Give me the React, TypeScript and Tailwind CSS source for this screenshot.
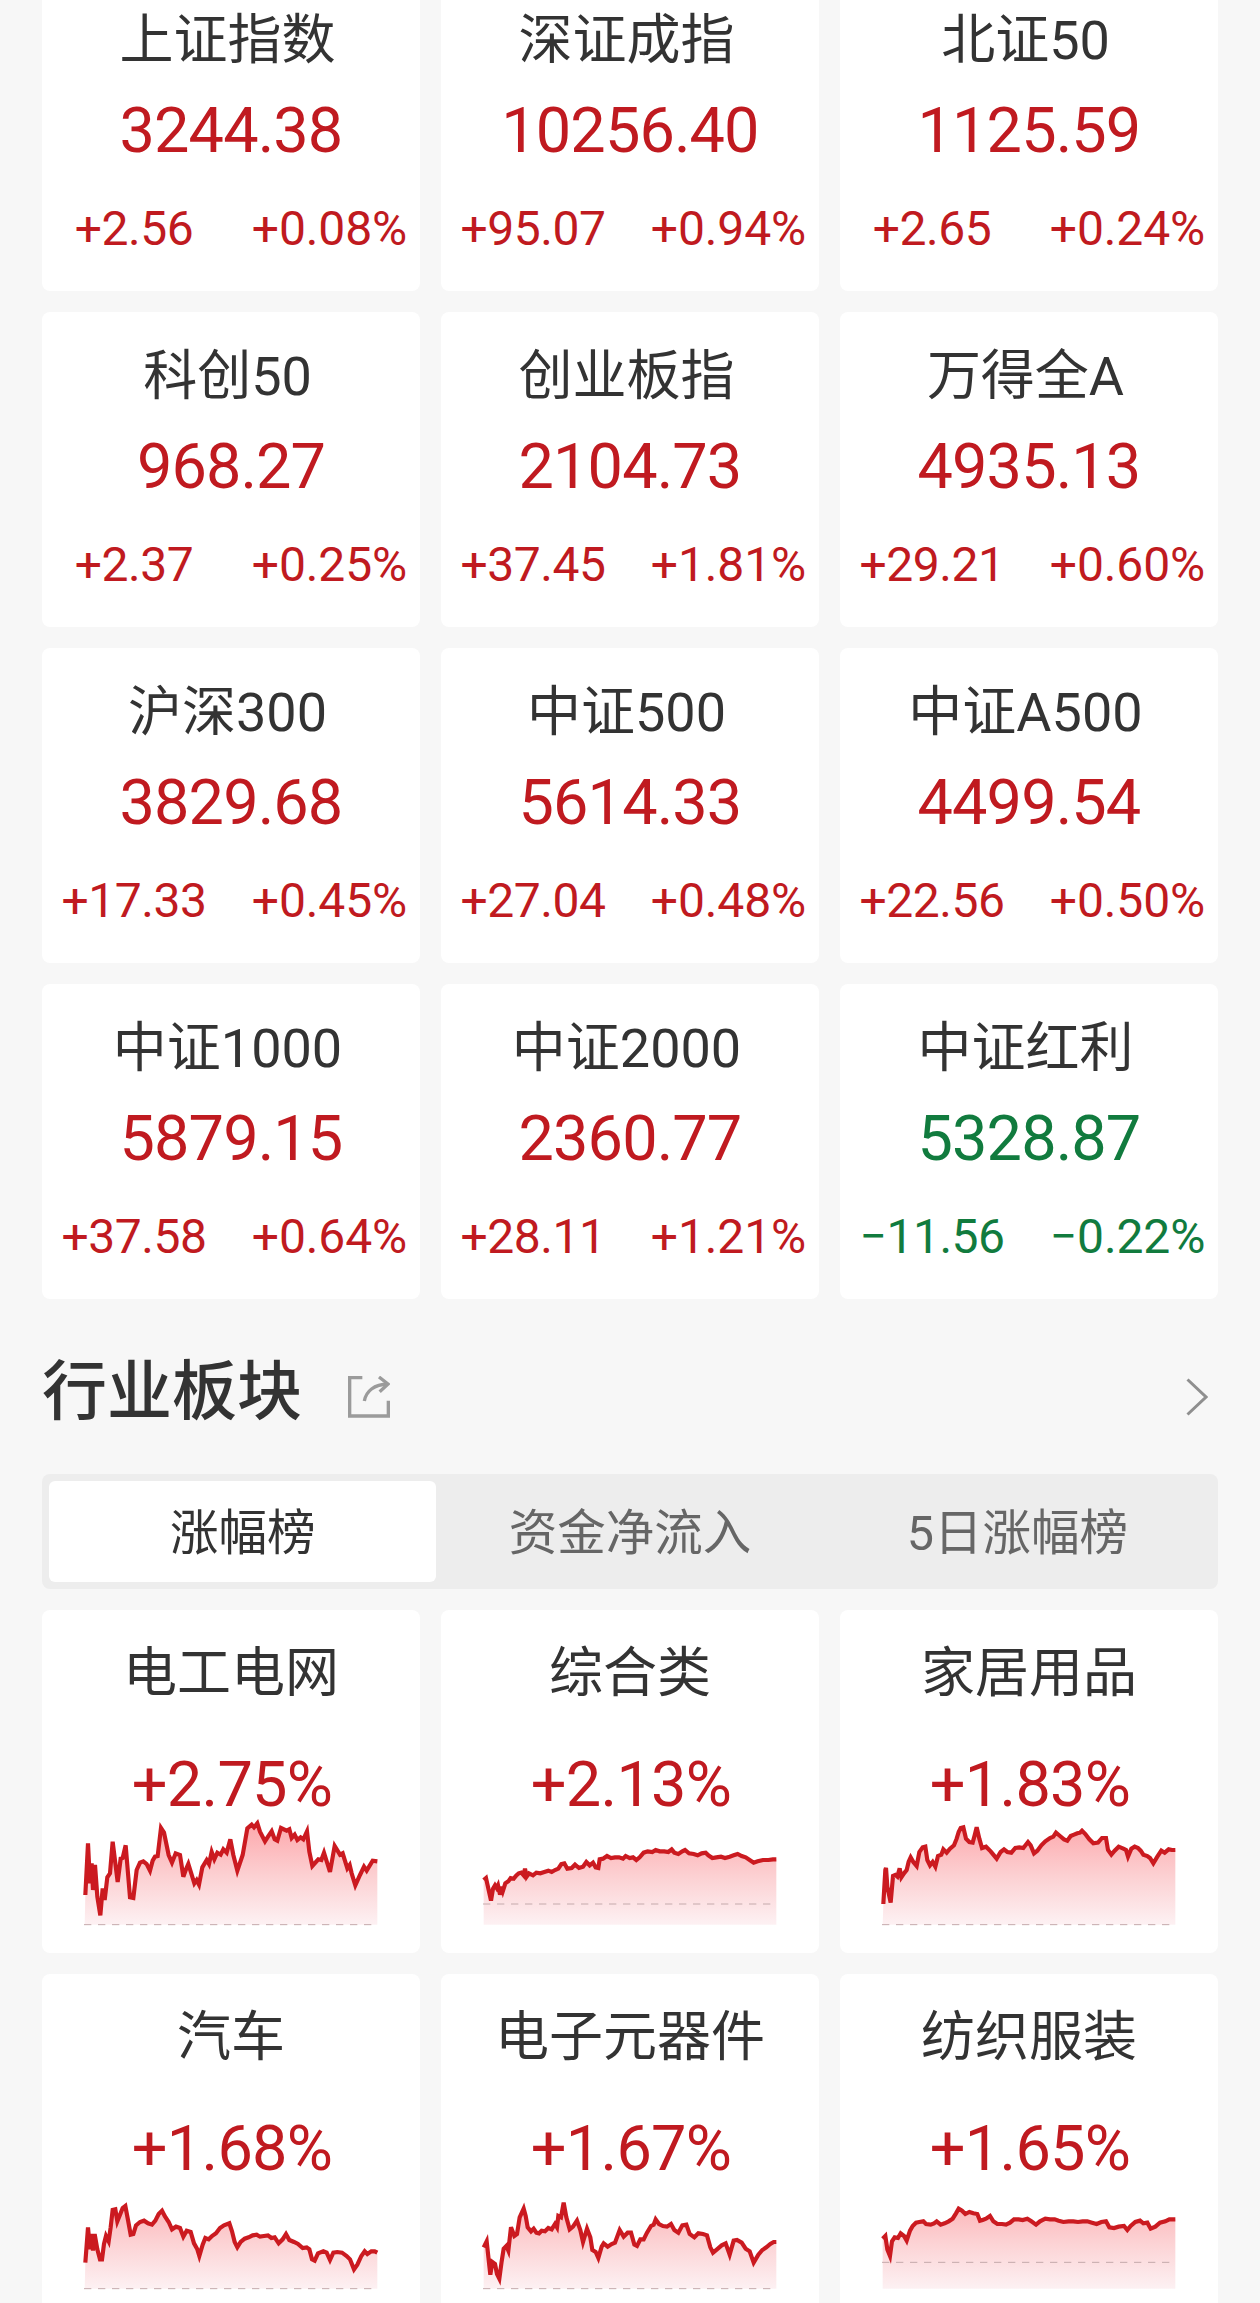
import { useId } from 'react';
import clsx from 'clsx';

interface IndexQuote {
  name: string;
  price: string;
  change: string;
  percent: string;
}

interface Sector {
  name: string;
  percent: string;
  // y of the previous-close line
  base: number;
  points: string;
}

const indices: IndexQuote[] = [
  { name: '上证指数', price: '3244.38', change: '+2.56', percent: '+0.08%' },
  { name: '深证成指', price: '10256.40', change: '+95.07', percent: '+0.94%' },
  { name: '北证50', price: '1125.59', change: '+2.65', percent: '+0.24%' },
  { name: '科创50', price: '968.27', change: '+2.37', percent: '+0.25%' },
  { name: '创业板指', price: '2104.73', change: '+37.45', percent: '+1.81%' },
  { name: '万得全A', price: '4935.13', change: '+29.21', percent: '+0.60%' },
  { name: '沪深300', price: '3829.68', change: '+17.33', percent: '+0.45%' },
  { name: '中证500', price: '5614.33', change: '+27.04', percent: '+0.48%' },
  { name: '中证A500', price: '4499.54', change: '+22.56', percent: '+0.50%' },
  { name: '中证1000', price: '5879.15', change: '+37.58', percent: '+0.64%' },
  { name: '中证2000', price: '2360.77', change: '+28.11', percent: '+1.21%' },
  { name: '中证红利', price: '5328.87', change: '−11.56', percent: '−0.22%' },
];

const tabs = ['涨幅榜', '资金净流入', '5日涨幅榜'];

const sectors: Sector[] = [
  {
    name: '电工电网',
    percent: '+2.75%',
    base: 314,
    points:
      '4,225 12,70 18,190 23,130 27,210 33,135 40,230 49,286 56,205 62,240 70,172 78,160 86,65 101,186 110,116 116,114 125,76 138,232 148,234 158,150 168,128 178,124 188,132 198,152 206,122 213,110 221,108 231,24 240,38 254,105 264,128 275,100 288,105 298,170 306,148 313,132 331,190 338,180 345,194 355,142 368,120 375,132 383,96 391,118 400,98 410,104 418,88 428,98 439,58 448,105 460,152 476,105 490,25 503,14 510,22 520,10 528,35 543,64 552,50 563,34 572,58 580,62 591,24 608,32 616,28 623,54 632,44 640,60 650,52 658,58 669,34 676,95 685,138 703,118 712,120 720,98 738,156 752,78 768,104 776,100 790,145 797,135 803,160 814,196 828,165 840,140 848,152 866,122 880,124',
  },
  {
    name: '综合类',
    percent: '+2.13%',
    base: 252,
    points:
      '2,180 9,174 17,210 24,242 30,206 36,196 41,204 45,196 51,224 57,200 60,212 67,190 76,184 83,174 92,176 100,166 107,160 115,158 122,166 126,146 131,170 138,160 150,166 160,158 172,160 184,156 196,152 206,156 216,150 226,146 235,132 244,130 253,146 266,144 276,134 288,144 300,140 310,126 320,136 330,128 338,142 346,144 350,118 360,116 372,108 384,114 396,112 408,112 420,116 428,108 440,114 450,112 460,120 470,112 482,98 494,94 508,96 518,90 530,94 544,94 556,96 566,88 574,98 586,102 598,94 606,90 618,100 632,102 644,106 656,100 668,98 676,106 688,114 700,112 714,110 726,114 740,110 752,106 764,102 776,108 788,112 800,120 812,128 824,124 840,120 856,120 870,118 880,118',
  },
  {
    name: '家居用品',
    percent: '+1.83%',
    base: 314,
    points:
      '4,252 10,150 12,144 16,200 26,248 33,168 40,165 46,170 53,145 58,172 66,160 74,150 80,125 86,112 94,126 104,138 112,96 122,82 130,80 136,120 144,136 152,126 160,140 168,108 178,104 184,88 194,98 204,86 216,76 224,56 230,36 236,24 244,22 252,56 262,66 272,68 278,46 284,22 292,56 300,84 312,80 326,94 334,104 344,116 356,96 366,88 376,96 388,98 400,84 412,82 424,84 438,66 446,76 456,100 466,92 478,76 490,64 504,54 514,50 522,38 534,48 546,58 556,62 566,48 576,44 586,40 594,38 600,32 610,42 622,58 634,70 648,68 660,54 672,54 678,90 688,104 698,92 710,80 724,86 732,90 738,110 748,86 758,80 768,84 776,92 784,104 796,108 804,114 814,130 826,110 838,92 848,98 860,88 870,90 880,90',
  },
  {
    name: '汽车',
    percent: '+1.68%',
    base: 314,
    points:
      '4,236 12,130 18,196 22,150 27,200 32,150 40,196 48,226 54,226 60,180 66,156 74,172 80,130 86,78 94,76 100,112 108,92 116,72 124,66 132,108 140,152 148,150 156,124 168,114 180,110 192,118 204,122 214,110 224,90 234,80 242,96 254,114 264,136 276,128 288,132 298,158 308,140 320,144 330,178 340,196 346,216 356,182 364,162 374,166 384,156 396,148 408,132 420,124 436,118 444,142 452,174 460,190 470,174 482,164 494,160 506,154 518,152 528,158 540,156 552,154 562,162 572,160 584,178 596,166 606,150 616,168 630,174 642,180 656,192 668,190 676,196 684,226 692,230 702,208 718,202 728,206 738,228 748,206 760,204 774,206 788,216 798,226 810,256 820,242 832,216 842,202 850,210 862,202 872,202 880,206',
  },
  {
    name: '电子元器件',
    percent: '+1.67%',
    base: 314,
    points:
      '2,190 11,172 18,236 22,272 28,234 36,240 42,270 49,284 56,232 62,194 70,186 76,200 84,130 94,156 102,150 110,100 122,74 128,96 134,130 144,142 152,134 160,146 168,148 176,140 186,142 196,132 206,136 216,120 222,130 226,96 234,100 242,56 250,100 260,136 270,128 282,110 292,138 300,174 312,134 322,160 328,198 338,204 346,222 356,188 362,178 374,188 386,180 396,176 410,138 422,158 434,146 444,146 454,182 462,186 472,166 482,166 492,146 504,126 512,122 518,106 528,120 540,126 552,128 564,120 574,138 586,146 598,124 610,122 620,150 634,160 646,148 660,150 672,154 682,190 690,206 702,196 716,184 728,178 740,212 752,170 762,168 776,176 788,194 800,202 812,236 826,212 838,198 850,190 862,180 872,174 880,174',
  },
  {
    name: '纺织服装',
    percent: '+1.65%',
    base: 235,
    points:
      '2,164 10,156 16,196 24,216 30,172 38,160 48,162 56,148 66,156 74,170 84,140 92,126 102,116 112,114 124,112 132,120 146,122 156,118 164,112 176,122 188,118 200,112 212,104 222,88 230,74 240,80 250,90 262,84 274,88 286,90 294,110 302,108 312,104 324,96 334,112 346,120 360,120 372,122 384,116 396,106 410,106 422,108 436,104 448,112 462,122 474,112 490,104 504,106 518,106 530,110 544,114 560,112 574,112 588,114 602,112 616,112 630,116 644,120 658,114 672,112 682,130 696,132 710,128 726,126 736,138 746,126 760,114 774,110 784,118 796,116 806,134 820,128 834,116 850,112 862,106 872,106 880,106',
  },
];

function ShareIcon() {
  return (
    <svg width="42" height="42" viewBox="0 0 126 126" fill="none" stroke="#9b9b9b" strokeWidth="10">
      <path d="M43 5H5V120H121V74" />
      <path d="M49 75C54 46 78 25 120 24" />
      <path d="M93 3L120 24L95 47" />
    </svg>
  );
}

function ChevronIcon() {
  return (
    <svg width="22" height="38" viewBox="0 0 22 38" fill="none" stroke="#8f8f8f" strokeWidth="3">
      <path d="M1.5 1.5L20 19L1.5 36.5" />
    </svg>
  );
}

function IndexCard({ quote }: { quote: IndexQuote }) {
  const down = quote.change.startsWith('−');
  return (
    <div
      className={clsx(
        'flex h-[315px] flex-col rounded-lg bg-white pt-[33px] text-center',
        down ? 'text-[#117b3e]' : 'text-[#c01a20]',
      )}
    >
      <div className="pr-[7px] text-[54px] leading-[64px] text-[#333]">{quote.name}</div>
      <div className="mt-[18px] text-[63px] leading-[80px] tracking-[-0.9px]">{quote.price}</div>
      <div className="mt-7 grid grid-cols-[184px_181px] gap-[13px] text-[48px] leading-[60px] whitespace-nowrap">
        <span className="tracking-[-0.5px]">{quote.change}</span>
        <span className="tracking-[-0.1px]">{quote.percent}</span>
      </div>
    </div>
  );
}

function Sparkline({ points, base }: { points: string; base: number }) {
  const id = useId();
  return (
    <svg className="mx-auto overflow-visible" width="294" height="106" viewBox="0 0 882 318" fill="none">
      <defs>
        <linearGradient id={id} gradientUnits="userSpaceOnUse" x1="0" y1="20" x2="0" y2="314">
          <stop offset="0" stopColor="#fdaaae" />
          <stop offset="0.5" stopColor="#fcd0d2" />
          <stop offset="1" stopColor="#fdf1f3" />
        </linearGradient>
      </defs>
      <polygon points={`2,314 ${points} 880,314`} fill={`url(#${id})`} />
      <path d={`M0 ${base}H870`} stroke="#c4a9ab" strokeWidth="3" strokeDasharray="22 20" />
      <polyline points={points} stroke="#cb1a20" strokeWidth="12.5" />
    </svg>
  );
}

function SectorCard({ sector }: { sector: Sector }) {
  return (
    <div className="flex h-[343px] flex-col rounded-lg bg-white pt-8 text-center">
      <div className="text-[54px] leading-[64px] text-[#333]">{sector.name}</div>
      <div className="mt-[43px] mb-[-1px] pl-[2px] text-[63px] leading-[72px] tracking-[-0.7px] text-[#c01a20]">
        {sector.percent}
      </div>
      <Sparkline points={sector.points} base={sector.base} />
    </div>
  );
}

export default function App() {
  return (
    <div className="h-[2303px] w-[1260px] overflow-hidden bg-[#f7f7f7] px-[42px] font-['Roboto','Noto_Sans_CJK_SC',sans-serif]">
      {/* Market indices, scrolled slightly past the top */}
      <div className="-mt-6 grid grid-cols-3 gap-[21px]">
        {indices.map((quote) => (
          <IndexCard key={quote.name} quote={quote} />
        ))}
      </div>

      {/* Sector header */}
      <div className="flex h-[175px] items-center pt-[11px]">
        <h2 className="text-[65px] leading-[78px] font-medium text-[#333]">行业板块</h2>
        <div className="mt-[10px] ml-[46px]">
          <ShareIcon />
        </div>
        <div className="mt-[10px] mr-[10px] ml-auto">
          <ChevronIcon />
        </div>
      </div>

      <div className="grid h-[115px] grid-cols-3 rounded-lg bg-[#ededed] p-[7px]">
        {tabs.map((tab, i) => (
          <button
            key={tab}
            className={clsx(
              'flex items-center justify-center rounded-md pt-[5px] text-[48.5px] leading-none',
              i === 0 ? 'bg-white text-[#333]' : 'text-[#666]',
            )}
          >
            {tab}
          </button>
        ))}
      </div>

      <div className="mt-[21px] grid grid-cols-3 gap-[21px]">
        {sectors.map((sector) => (
          <SectorCard key={sector.name} sector={sector} />
        ))}
      </div>
    </div>
  );
}
